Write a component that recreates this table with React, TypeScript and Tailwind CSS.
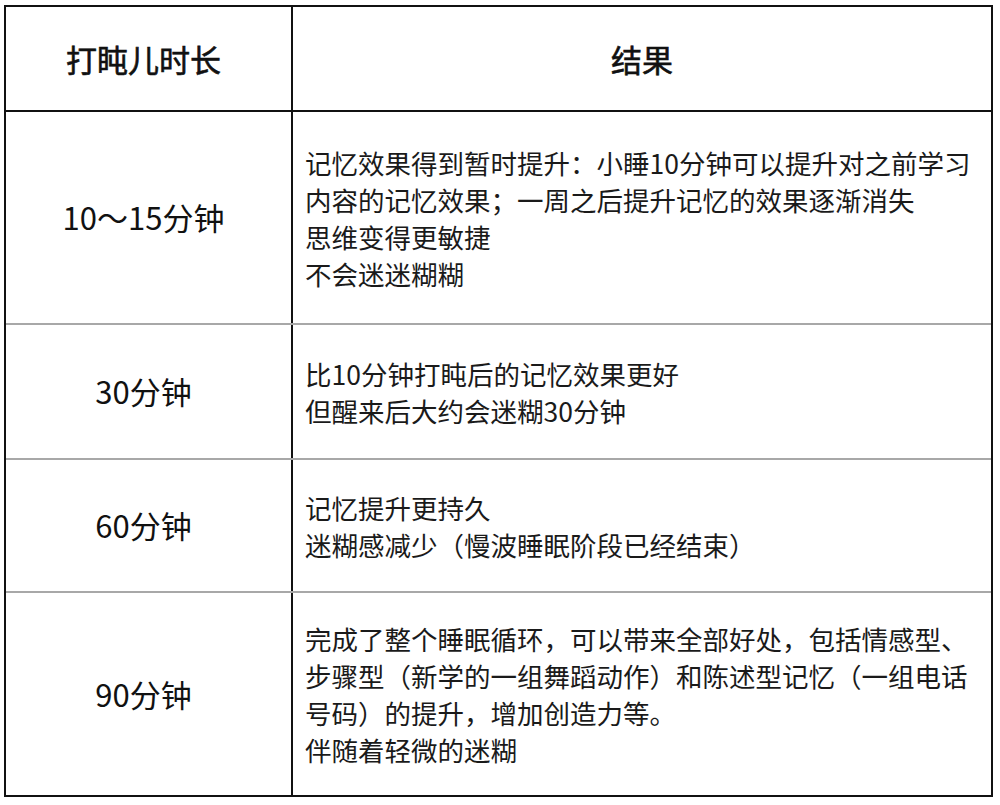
import React from "react";

const font = { fontFamily: '"Noto Sans CJK SC", "Noto Sans", sans-serif' };

type Row = { left: string; lines: string[]; h: string; last?: boolean };

const rows: Row[] = [
  {
    left: "10～15分钟",
    lines: [
      "记忆效果得到暂时提升：小睡10分钟可以提升对之前学习",
      "内容的记忆效果；一周之后提升记忆的效果逐渐消失",
      "思维变得更敏捷",
      "不会迷迷糊糊",
    ],
    h: "h-[211px]",
  },
  {
    left: "30分钟",
    lines: ["比10分钟打盹后的记忆效果更好", "但醒来后大约会迷糊30分钟"],
    h: "h-[133px]",
  },
  {
    left: "60分钟",
    lines: ["记忆提升更持久", "迷糊感减少（慢波睡眠阶段已经结束）"],
    h: "h-[131px]",
  },
  {
    left: "90分钟",
    lines: [
      "完成了整个睡眠循环，可以带来全部好处，包括情感型、",
      "步骤型（新学的一组舞蹈动作）和陈述型记忆（一组电话",
      "号码）的提升，增加创造力等。",
      "伴随着轻微的迷糊",
    ],
    h: "h-[202px]",
    last: true,
  },
];

export default function App() {
  return (
    <div className="w-[1000px] h-[805px] bg-white" style={font}>
      <div className="ml-[4px] pt-[5px]">
        <div className="w-[989px] border-2 border-[#111]">
          <div className="grid grid-cols-[287px_1fr] h-[103px] border-b-2 border-[#111] box-content">
            <div className="flex items-center justify-center border-r-2 border-[#111] text-[31px] font-normal [-webkit-text-stroke:0.6px_#111] text-[#111] pr-[10px] pt-[2px]">
              打盹儿时长
            </div>
            <div className="flex items-center justify-center text-[31px] font-normal [-webkit-text-stroke:0.6px_#111] text-[#111] pt-[2px]">
              结果
            </div>
          </div>
          {rows.map((r, i) => (
            <div
              key={i}
              className={`grid grid-cols-[287px_1fr] box-content ${r.h} ${r.last ? "" : "border-b-2 border-[#a8a8a8]"}`}
            >
              <div className="flex items-center justify-center border-r-2 border-[#111] text-[31px] text-[#111] pr-[10px]">
                {r.left}
              </div>
              <div className="flex flex-col justify-center pl-[12px] text-[26.5px] leading-[37px] text-[#1a1a1a] whitespace-nowrap">
                {r.lines.map((l, j) => (
                  <div key={j}>{l}</div>
                ))}
              </div>
            </div>
          ))}
        </div>
      </div>
    </div>
  );
}
